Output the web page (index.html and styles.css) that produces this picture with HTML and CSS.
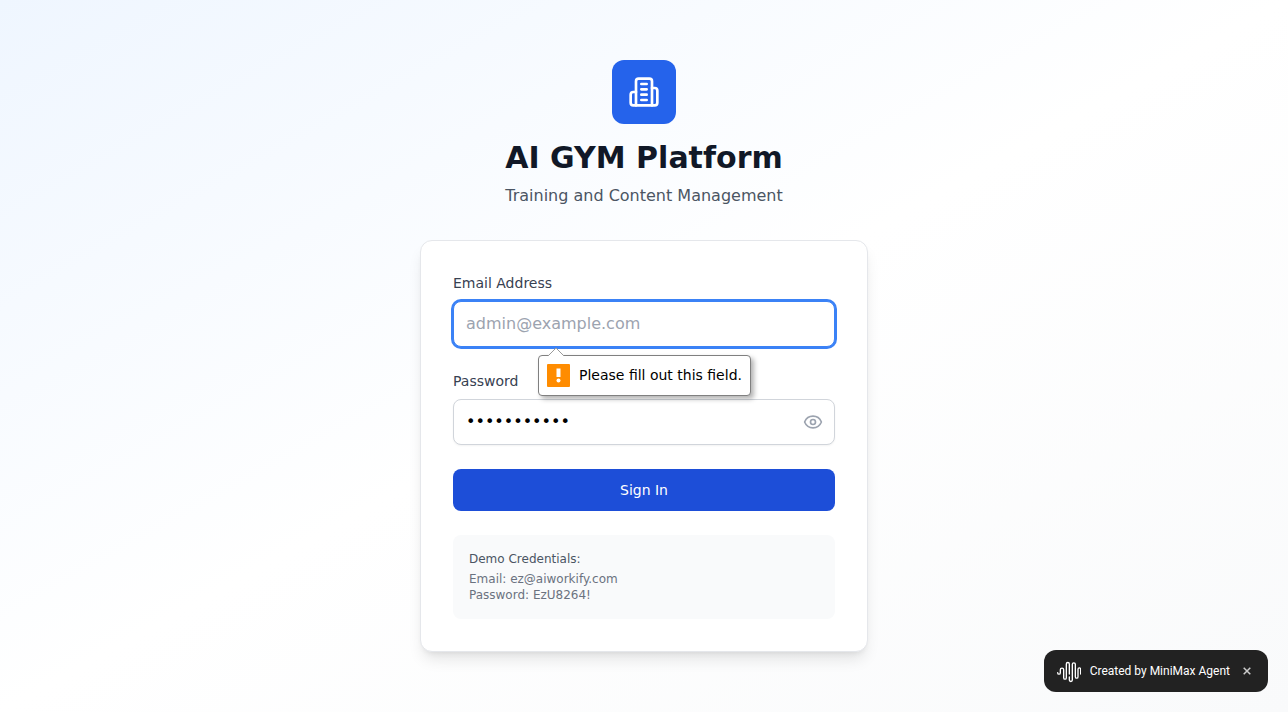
FILE: index.html
```html
<!DOCTYPE html>
<html lang="en">
<head>
<meta charset="utf-8">
<meta name="viewport" content="width=device-width, initial-scale=1">
<title>AI GYM Platform</title>
<link rel="stylesheet" href="styles.css">
</head>
<body class="page">
<main class="login">
  <header class="brand">
    <div class="brand-logo">
      <svg width="32" height="32" viewBox="0 0 24 24" fill="none" stroke="currentColor" stroke-width="2" stroke-linecap="round" stroke-linejoin="round" aria-hidden="true">
        <path d="M6 22V4a2 2 0 0 1 2-2h8a2 2 0 0 1 2 2v18Z"/>
        <path d="M6 12H4a2 2 0 0 0-2 2v6a2 2 0 0 0 2 2h2"/>
        <path d="M18 9h2a2 2 0 0 1 2 2v9a2 2 0 0 1-2 2h-2"/>
        <path d="M10 6h4M10 10h4M10 14h4M10 18h4"/>
      </svg>
    </div>
    <h1 class="brand-title">AI GYM Platform</h1>
    <p class="brand-subtitle">Training and Content Management</p>
  </header>

  <section class="card">
    <form class="form" novalidate>
      <div class="field">
        <label class="label" for="email">Email Address</label>
        <div class="control">
          <input class="input input-active" id="email" type="email" placeholder="admin@example.com" aria-describedby="email-hint">
          <div class="hint" id="email-hint" role="alert">
            <svg class="hint-arrow" width="18" height="9" viewBox="0 0 18 9" aria-hidden="true">
              <path d="M1 9 9 1l8 8" fill="#fff" stroke="#9a9a9a"/>
            </svg>
            <svg width="23" height="23" viewBox="0 0 23 23" aria-hidden="true">
              <rect width="23" height="23" rx="1" fill="#ff8c00"/>
              <path d="M9.5 4.500h4v8.500h-4z" fill="#fff"/>
              <circle cx="11.5" cy="16.5" r="2" fill="#fff"/>
            </svg>
            <span>Please fill out this field.</span>
          </div>
        </div>
      </div>

      <div class="field">
        <label class="label" for="password">Password</label>
        <div class="control">
          <input class="input input-password" id="password" type="password" value="password123">
          <button class="reveal" type="button" aria-label="Show password">
            <svg width="20" height="20" viewBox="0 0 24 24" fill="none" stroke="currentColor" stroke-width="2" stroke-linecap="round" stroke-linejoin="round" aria-hidden="true">
              <path d="M2.062 12.348a1 1 0 0 1 0-.696 10.750 10.750 0 0 1 19.876 0 1 1 0 0 1 0 .696 10.750 10.750 0 0 1-19.876 0"/>
              <circle cx="12" cy="12" r="3"/>
            </svg>
          </button>
        </div>
      </div>

      <button class="submit" type="submit">Sign In</button>
    </form>

    <div class="demo">
      <p class="demo-title">Demo Credentials:</p>
      <p>Email: ez@aiworkify.com</p>
      <p>Password: EzU8264!</p>
    </div>
  </section>
</main>

<aside class="badge">
  <svg width="24" height="24" viewBox="0 0 72 72" fill="none" stroke="currentColor" stroke-width="4" stroke-linecap="round" aria-hidden="true">
    <path d="M2 41c0 6 8 6 8 0V32c0-6 10-6 10 0v24c0 6 8 6 8 0V15c0-6 9-6 9 0v30"/>
    <path d="M37 54v9c0 6 9 6 9 0V16c0-6 9-6 9 0v37c0 6 8 6 8 0V31c0-6 8-6 8 0v14"/>
  </svg>
  <span>Created by MiniMax Agent</span>
  <button class="badge-close" type="button" aria-label="Close">
    <svg width="8" height="8" viewBox="0 0 8 8" fill="none" stroke="currentColor" stroke-width="1.5" aria-hidden="true">
      <path d="M.7.7l6.600 6.600M7.300.7.7 7.300"/>
    </svg>
  </button>
</aside>
</body>
</html>
```
FILE: styles.css
```css
*,
*::before,
*::after {
  box-sizing: border-box;
}

.page {
  margin: 0;
  min-height: 100vh;
  display: flex;
  align-items: center;
  justify-content: center;
  padding: 16px;
  background: linear-gradient(to bottom right, #eff6ff, #ffffff, #f9fafb);
  font-family: "DejaVu Sans", sans-serif;
  font-size: 16px;
  line-height: 24px;
  color: #111827;
}

h1,
p {
  margin: 0;
}

button,
input {
  font: inherit;
}

.login {
  width: 100%;
  max-width: 448px;
  display: flex;
  flex-direction: column;
  gap: 32px;
}

.brand {
  display: flex;
  flex-direction: column;
  align-items: center;
  text-align: center;
}

.brand-logo {
  display: flex;
  padding: 16px;
  margin-bottom: 16px;
  border-radius: 12px;
  background: #2563eb;
  color: #fff;
}

.brand-title {
  margin-bottom: 8px;
  font-size: 30px;
  line-height: 36px;
  font-weight: 700;
}

.brand-subtitle {
  color: #4b5563;
}

.card {
  padding: 32px;
  display: flex;
  flex-direction: column;
  gap: 24px;
  background: #fff;
  border: 1px solid #e5e7eb;
  border-radius: 12px;
  box-shadow: 0 10px 15px -3px rgba(0, 0, 0, 0.1), 0 4px 6px -4px rgba(0, 0, 0, 0.1);
}

.form {
  display: flex;
  flex-direction: column;
  gap: 24px;
}

.field {
  display: flex;
  flex-direction: column;
  gap: 8px;
}

.label {
  font-size: 14px;
  line-height: 20px;
  color: #374151;
}

.control {
  position: relative;
  display: flex;
}

.input {
  flex: 1;
  min-width: 0;
  height: 46px;
  padding: 10px 12px 12px;
  border: 1px solid #d1d5db;
  border-radius: 8px;
  outline: none;
  background: #fff;
  color: #000;
  box-shadow: 0 1px 2px rgba(0, 0, 0, 0.05);
}

.input::placeholder {
  color: #9ca3af;
  opacity: 1;
}

.input-active,
.input:focus {
  border-color: #3b82f6;
  box-shadow: 0 0 0 2px #3b82f6;
}

.input-password {
  padding-right: 40px;
}

.reveal {
  position: absolute;
  top: 0;
  bottom: 0;
  right: 0;
  display: flex;
  align-items: center;
  padding: 0 12px;
  border: 0;
  background: none;
  color: #9ca3af;
}

.hint {
  position: absolute;
  z-index: 1;
  top: 54px;
  left: 85px;
  display: flex;
  align-items: flex-start;
  gap: 9px;
  padding: 8px;
  border: 1px solid #808080;
  border-radius: 4px;
  background: #fff;
  color: #000;
  font-size: 14px;
  line-height: 22px;
  white-space: nowrap;
  box-shadow: 3px 3px 5px rgba(0, 0, 0, 0.3);
}

.hint-arrow {
  position: absolute;
  top: -9px;
  left: 8px;
}

.submit {
  padding: 11px 16px;
  border: 0;
  border-radius: 8px;
  background: #1d4ed8;
  color: #fff;
  font-size: 14px;
  line-height: 20px;
}

.demo {
  padding: 16px;
  border-radius: 8px;
  background: #f9fafb;
  color: #6b7280;
  font-size: 12px;
  line-height: 16px;
}

.demo-title {
  margin-bottom: 4px;
  color: #4b5563;
}

.badge {
  position: fixed;
  right: 20px;
  bottom: 20px;
  display: flex;
  align-items: center;
  gap: 9px;
  padding: 9px 13px;
  border-radius: 12px;
  background: #222;
  color: #fff;
  font-family: Roboto, sans-serif;
  font-size: 12px;
  line-height: 24px;
}

.badge-close {
  display: flex;
  padding: 4px;
  border: 0;
  background: none;
  color: #ccc;
}
```
